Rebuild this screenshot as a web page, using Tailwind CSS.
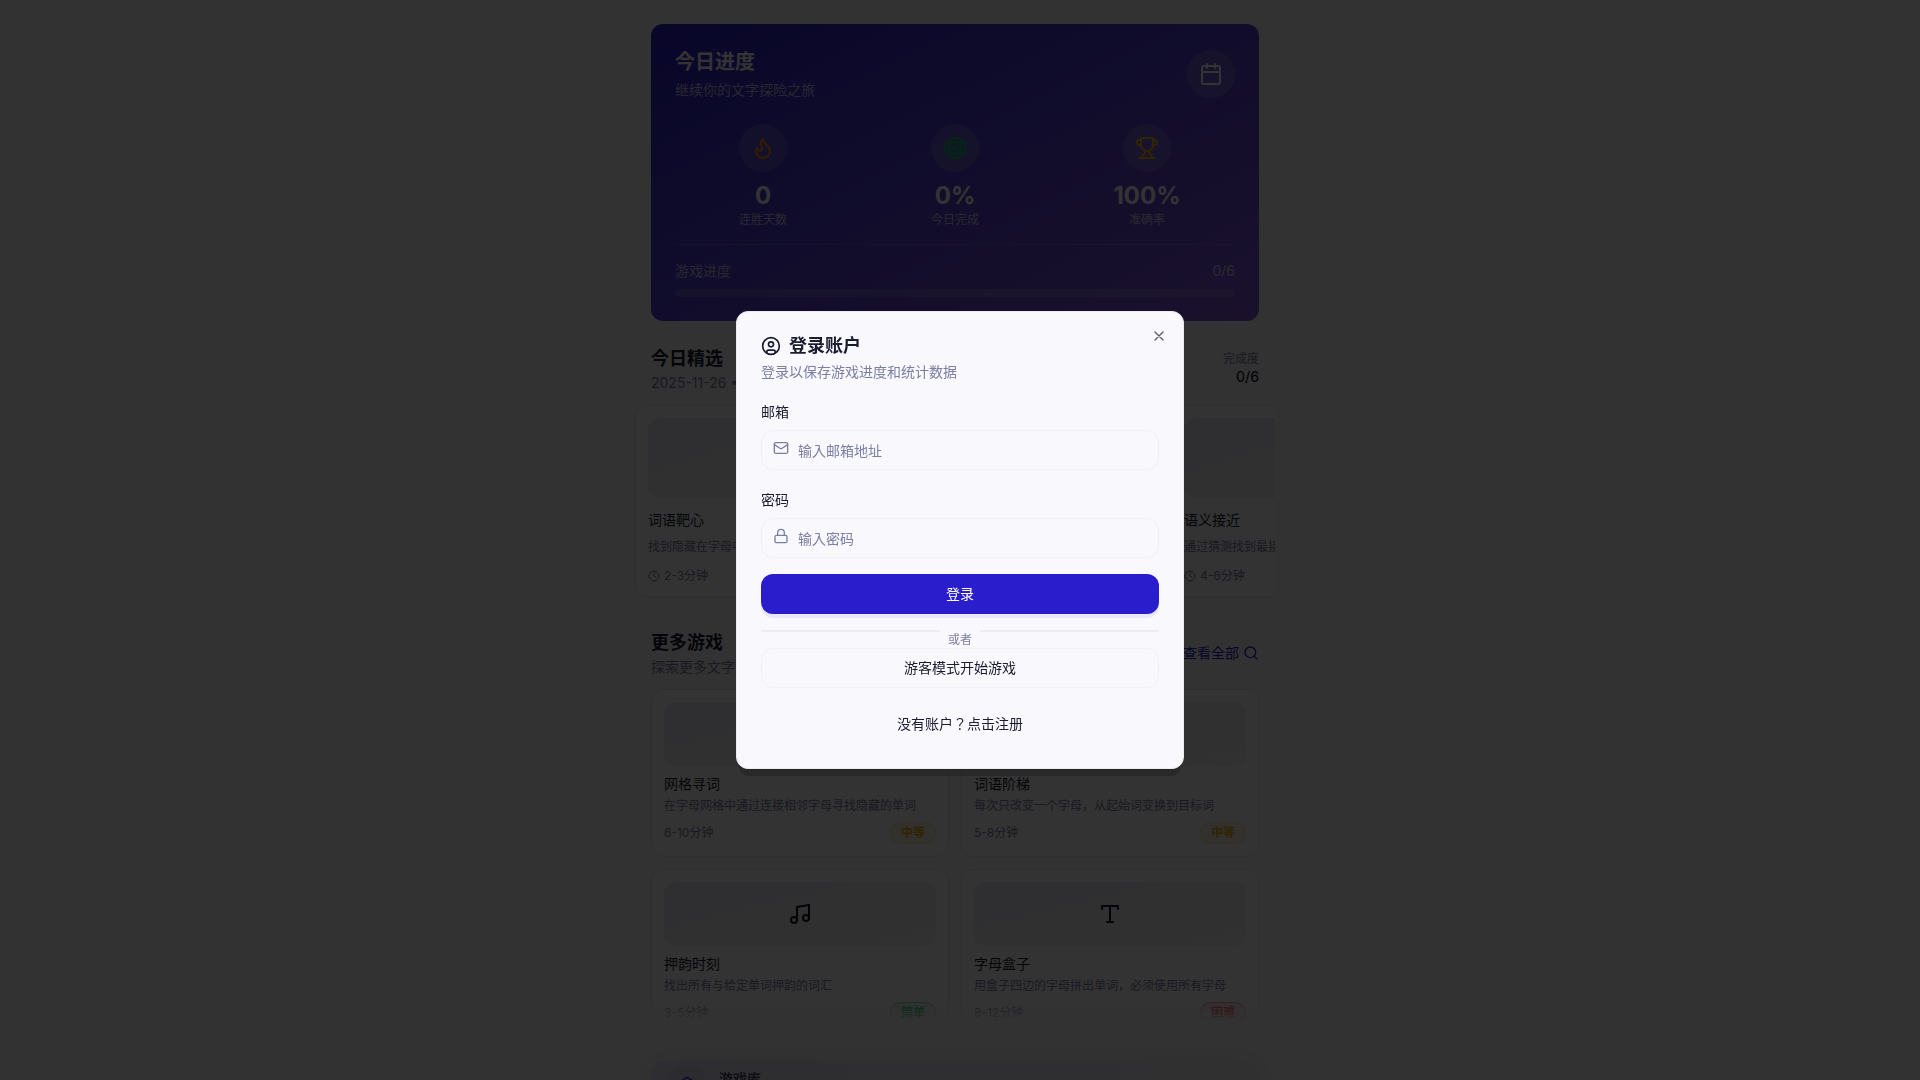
<!DOCTYPE html>
<html lang="en">
<head>
    <meta charset="UTF-8">
    <meta name="viewport" content="width=device-width, initial-scale=1.0">
    <title>登录账户</title>
    <script src="https://cdn.jsdelivr.net/npm/@tailwindcss/browser@4"></script>
</head>
<body class="h-screen overflow-hidden bg-[#fafafa] pr-[10px] font-['Inter','Noto_Sans_CJK_JP',sans-serif] text-[#1c1c30]">
    <main class="mx-auto max-w-[640px] overflow-hidden px-4 pt-6">
        <!-- Today's progress -->
        <section class="rounded-xl bg-linear-to-br from-[#2a1dcc] to-[#8254dc] p-6 text-white">
            <div class="mb-6 flex items-center justify-between">
                <div>
                    <h2 class="text-xl leading-7 font-bold">今日进度</h2>
                    <p class="mt-1 text-sm text-white/70">继续你的文字探险之旅</p>
                </div>
                <div class="flex size-12 items-center justify-center rounded-full bg-white/15">
                    <svg class="size-6" viewBox="0 0 24 24" fill="none" stroke="currentColor" stroke-width="2" stroke-linecap="round" stroke-linejoin="round"><path d="M8 2v4M16 2v4M3 10h18"/><rect x="3" y="4" width="18" height="18" rx="2"/></svg>
                </div>
            </div>
            <div class="grid grid-cols-3 gap-4 text-center">
                <div>
                    <div class="mx-auto mb-2 flex size-12 items-center justify-center rounded-full bg-white/15 text-orange-400">
                        <svg class="size-6" viewBox="0 0 24 24" fill="none" stroke="currentColor" stroke-width="2" stroke-linecap="round" stroke-linejoin="round"><path d="M8.5 14.5A2.5 2.5 0 0 0 11 12c0-1.38-.5-2-1-3-1.072-2.143-.224-4.054 2-6 .5 2.5 2 4.9 4 6.5 2 1.6 3 3.5 3 5.5a7 7 0 1 1-14 0c0-1.153.433-2.294 1-3a2.5 2.5 0 0 0 2.5 2.5z"/></svg>
                    </div>
                    <div class="text-2xl leading-8 font-bold">0</div>
                    <div class="text-xs text-white/70">连胜天数</div>
                </div>
                <div>
                    <div class="mx-auto mb-2 flex size-12 items-center justify-center rounded-full bg-white/15 text-green-500">
                        <svg class="size-6" viewBox="0 0 24 24" fill="none" stroke="currentColor" stroke-width="2"><circle cx="12" cy="12" r="10"/><circle cx="12" cy="12" r="6"/><circle cx="12" cy="12" r="2"/></svg>
                    </div>
                    <div class="text-2xl leading-8 font-bold">0%</div>
                    <div class="text-xs text-white/70">今日完成</div>
                </div>
                <div>
                    <div class="mx-auto mb-2 flex size-12 items-center justify-center rounded-full bg-white/15 text-yellow-500">
                        <svg class="size-6" viewBox="0 0 24 24" fill="none" stroke="currentColor" stroke-width="2" stroke-linecap="round" stroke-linejoin="round"><path d="M6 9H4.500a2.500 2.500 0 0 1 0-5H6M18 9h1.500a2.500 2.500 0 0 0 0-5H18M4 22h16M10 14.660V17c0 .55-.47.98-.97 1.210C7.850 18.750 7 20.240 7 22M14 14.660V17c0 .55.47.98.97 1.210C16.150 18.750 17 20.240 17 22M18 2H6v7a6 6 0 0 0 12 0V2Z"/></svg>
                    </div>
                    <div class="text-2xl leading-8 font-bold">100%</div>
                    <div class="text-xs text-white/70">准确率</div>
                </div>
            </div>
            <div class="mt-4 border-t border-white/15 pt-4">
                <div class="mb-2 flex justify-between text-sm text-white/70">
                    <span>游戏进度</span>
                    <span>0/6</span>
                </div>
                <div class="h-2 rounded-full bg-white/15"></div>
            </div>
        </section>

        <!-- Daily picks -->
        <section class="mt-6">
            <div class="flex items-center justify-between">
                <div>
                    <h2 class="text-lg leading-7 font-bold">今日精选</h2>
                    <p class="text-sm text-[#7c7fa3]">2025-11-26 • 6个游戏</p>
                </div>
                <div class="text-right">
                    <div class="text-xs text-[#7c7fa3]">完成度</div>
                    <div class="text-sm font-medium">0/6</div>
                </div>
            </div>
            <div class="-mx-4 mt-3 flex gap-3 overflow-hidden">
                <article class="w-64 shrink-0 rounded-xl border border-[#e6e6ec] bg-[#fcfcfd] p-3">
                    <div class="h-20 rounded-xl bg-linear-to-br from-[#e9e9f4] to-[#f3f3f6]"></div>
                    <h3 class="mt-3 text-sm">词语靶心</h3>
                    <p class="mt-2 truncate text-xs leading-[18px] text-[#7c7fa3]">找到隐藏在字母中的单词</p>
                    <div class="mt-3 flex items-center gap-1 text-xs text-[#7c7fa3]">
                        <svg class="size-3" viewBox="0 0 24 24" fill="none" stroke="currentColor" stroke-width="2" stroke-linecap="round"><circle cx="12" cy="12" r="10"/><path d="M12 6v6l4 2"/></svg>
                        2-3分钟
                    </div>
                </article>
                <article class="w-64 shrink-0 rounded-xl border border-[#e6e6ec] bg-[#fcfcfd] p-3"></article>
                <article class="w-64 shrink-0 rounded-xl border border-[#e6e6ec] bg-[#fcfcfd] p-3">
                    <div class="h-20 rounded-xl bg-linear-to-br from-[#e9e9f4] to-[#f3f3f6]"></div>
                    <h3 class="mt-3 text-sm">语义接近</h3>
                    <p class="mt-2 truncate text-xs leading-[18px] text-[#7c7fa3]">通过猜测找到最接近的词语</p>
                    <div class="mt-3 flex items-center gap-1 text-xs text-[#7c7fa3]">
                        <svg class="size-3" viewBox="0 0 24 24" fill="none" stroke="currentColor" stroke-width="2" stroke-linecap="round"><circle cx="12" cy="12" r="10"/><path d="M12 6v6l4 2"/></svg>
                        4-6分钟
                    </div>
                </article>
            </div>
        </section>

        <!-- More games -->
        <section class="mt-8">
            <div class="flex items-center justify-between">
                <div>
                    <h2 class="text-lg leading-7 font-bold">更多游戏</h2>
                    <p class="text-sm text-[#7c7fa3]">探索更多文字游戏</p>
                </div>
                <a href="#" class="flex items-center gap-1 text-sm text-[#2a1dcc]">
                    查看全部
                    <svg class="size-4" viewBox="0 0 24 24" fill="none" stroke="currentColor" stroke-width="2" stroke-linecap="round"><circle cx="11" cy="11" r="8"/><path d="m21 21-4.300-4.300"/></svg>
                </a>
            </div>
            <div class="mt-3 grid grid-cols-2 gap-3">
                <article class="rounded-xl border border-[#e6e6ec] bg-[#fcfcfd] p-3">
                    <div class="h-16 rounded-xl bg-linear-to-br from-[#e9e9f4] to-[#f3f3f6]"></div>
                    <h3 class="mt-2 text-sm">网格寻词</h3>
                    <p class="mt-1 truncate text-xs text-[#7c7fa3]">在字母网格中通过连接相邻字母寻找隐藏的单词</p>
                    <div class="mt-2 flex items-center justify-between text-xs text-[#7c7fa3]">
                        <span>6-10分钟</span>
                        <span class="rounded-full border border-yellow-500/20 bg-yellow-500/10 px-2.5 py-0.5 font-semibold text-yellow-500">中等</span>
                    </div>
                </article>
                <article class="rounded-xl border border-[#e6e6ec] bg-[#fcfcfd] p-3">
                    <div class="h-16 rounded-xl bg-linear-to-br from-[#e9e9f4] to-[#f3f3f6]"></div>
                    <h3 class="mt-2 text-sm">词语阶梯</h3>
                    <p class="mt-1 truncate text-xs text-[#7c7fa3]">每次只改变一个字母，从起始词变换到目标词</p>
                    <div class="mt-2 flex items-center justify-between text-xs text-[#7c7fa3]">
                        <span>5-8分钟</span>
                        <span class="rounded-full border border-yellow-500/20 bg-yellow-500/10 px-2.5 py-0.5 font-semibold text-yellow-500">中等</span>
                    </div>
                </article>
                <article class="rounded-xl border border-[#e6e6ec] bg-[#fcfcfd] p-3">
                    <div class="flex h-16 items-center justify-center rounded-xl bg-linear-to-br from-[#e9e9f4] to-[#f3f3f6]">
                        <svg class="size-6" viewBox="0 0 24 24" fill="none" stroke="currentColor" stroke-width="2" stroke-linecap="round" stroke-linejoin="round"><path d="M9 18V5l12-2v13"/><circle cx="6" cy="18" r="3"/><circle cx="18" cy="16" r="3"/></svg>
                    </div>
                    <h3 class="mt-2 text-sm">押韵时刻</h3>
                    <p class="mt-1 truncate text-xs text-[#7c7fa3]">找出所有与给定单词押韵的词汇</p>
                    <div class="mt-2 flex items-center justify-between text-xs text-[#7c7fa3]">
                        <span>3-5分钟</span>
                        <span class="rounded-full border border-green-500/40 bg-green-500/10 px-2.5 py-0.5 font-semibold text-green-500">简单</span>
                    </div>
                </article>
                <article class="rounded-xl border border-[#e6e6ec] bg-[#fcfcfd] p-3">
                    <div class="flex h-16 items-center justify-center rounded-xl bg-linear-to-br from-[#e9e9f4] to-[#f3f3f6]">
                        <svg class="size-6" viewBox="0 0 24 24" fill="none" stroke="currentColor" stroke-width="2" stroke-linecap="round" stroke-linejoin="round"><path d="M4 7V4h16v3M9 20h6M12 4v16"/></svg>
                    </div>
                    <h3 class="mt-2 text-sm">字母盒子</h3>
                    <p class="mt-1 truncate text-xs text-[#7c7fa3]">用盒子四边的字母拼出单词，必须使用所有字母</p>
                    <div class="mt-2 flex items-center justify-between text-xs text-[#7c7fa3]">
                        <span>8-12分钟</span>
                        <span class="rounded-full border border-red-500/40 bg-red-500/10 px-2.5 py-0.5 font-semibold text-red-500">困难</span>
                    </div>
                </article>
            </div>
        </section>

        <!-- Library -->
        <section class="relative z-10 mt-6 flex gap-3 rounded-xl bg-linear-to-r from-[#e4e1f2] to-[#efeff5] px-4 py-1 shadow-[0_0_24px_4px_#ebeaf3]">
            <div class="flex size-10 shrink-0 items-center justify-center rounded-full bg-[#d9d5ef] text-[#5a48c8]">
                <svg class="size-5" viewBox="0 0 24 24" fill="none" stroke="currentColor" stroke-width="2" stroke-linejoin="round"><path d="m12 3 9 5-9 5-9-5zM3 12l9 5 9-5M3 16l9 5 9-5"/></svg>
            </div>
            <h3 class="mt-1 text-sm font-semibold text-[#4c4b60]">游戏库</h3>
        </section>
    </main>

    <!-- Bottom fade -->
    <div class="pointer-events-none fixed inset-x-0 bottom-0 h-20 bg-linear-to-b from-[#fafafa]/0 via-[#fafafa]/95 via-30% to-[#fafafa]"></div>

    <!-- Login dialog -->
    <div class="fixed inset-0 z-20 flex items-center justify-center bg-black/80">
        <div role="dialog" aria-modal="true" aria-labelledby="login-title" class="relative w-full max-w-md rounded-xl border border-[#ebebf2] bg-[#f8f8fd] p-6 shadow-[0_10px_0_-3px_rgb(0_0_0/0.2)]">
            <button type="button" aria-label="关闭" class="absolute top-4 right-4 text-[#1c1c30]/70">
                <svg class="size-4" viewBox="0 0 24 24" fill="none" stroke="currentColor" stroke-width="2" stroke-linecap="round"><path d="M18 6 6 18M6 6l12 12"/></svg>
            </button>
            <h2 id="login-title" class="flex items-center gap-2 text-lg leading-5 font-semibold">
                <svg class="size-5" viewBox="0 0 24 24" fill="none" stroke="currentColor" stroke-width="2" stroke-linecap="round"><circle cx="12" cy="12" r="10"/><circle cx="12" cy="10" r="3"/><path d="M7 20.662V19a2 2 0 0 1 2-2h6a2 2 0 0 1 2 2v1.662"/></svg>
                登录账户
            </h2>
            <p class="mt-1.5 text-sm text-[#7c7fa3]">登录以保存游戏进度和统计数据</p>
            <form class="mt-5">
                <label for="email" class="block text-sm">邮箱</label>
                <div class="relative mt-2">
                    <svg class="absolute top-2.5 left-3 size-4 text-[#7c7fa3]" viewBox="0 0 24 24" fill="none" stroke="currentColor" stroke-width="2" stroke-linecap="round" stroke-linejoin="round"><rect x="2" y="4" width="20" height="16" rx="2"/><path d="m22 7-8.970 5.700a1.940 1.940 0 0 1-2.060 0L2 7"/></svg>
                    <input id="email" type="email" placeholder="输入邮箱地址" class="h-10 w-full rounded-xl border border-[#f2f2f6] bg-transparent pr-3 pl-9 text-sm placeholder:text-[#7c7fa3]">
                </div>
                <label for="password" class="mt-5 block text-sm">密码</label>
                <div class="relative mt-2">
                    <svg class="absolute top-2.5 left-3 size-4 text-[#7c7fa3]" viewBox="0 0 24 24" fill="none" stroke="currentColor" stroke-width="2" stroke-linecap="round" stroke-linejoin="round"><rect x="3" y="11" width="18" height="11" rx="2"/><path d="M7 11V7a5 5 0 0 1 10 0v4"/></svg>
                    <input id="password" type="password" placeholder="输入密码" class="h-10 w-full rounded-xl border border-[#f2f2f6] bg-transparent pr-3 pl-9 text-sm placeholder:text-[#7c7fa3]">
                </div>
                <button type="submit" class="mt-4 h-10 w-full rounded-xl bg-[#2a1dcc] text-sm text-white shadow-[0_4px_0_#e9e7f8]">登录</button>
            </form>
            <div class="relative mt-4 flex justify-center border-t-2 border-[#ececf3]">
                <span class="-mt-0.5 bg-[#f8f8fd] px-2 pt-0.5 text-xs text-[#7c7fa3]">或者</span>
            </div>
            <button type="button" class="h-10 w-full rounded-xl border border-[#f2f2f6] text-sm">游客模式开始游戏</button>
            <button type="button" class="mt-4 h-10 w-full text-sm">没有账户？点击注册</button>
        </div>
    </div>
</body>
</html>
